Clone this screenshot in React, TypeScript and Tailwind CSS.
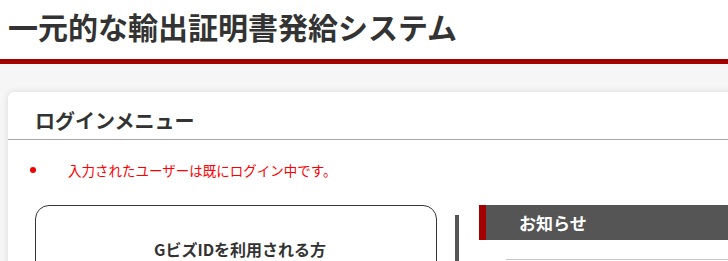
import React from "react";

const font = { fontFamily: '"Noto Sans CJK JP", "Noto Sans", sans-serif' };

const App = (): JSX.Element => {
  return (
    <div className="w-[728px] h-[261px] overflow-hidden bg-[#f6f6f6]" style={font}>
      <header className="h-[64px] bg-white border-b-[5px] border-[#a40000] flex items-center pl-[8px] pb-[8px]">
        <h1 className="text-[30px] font-bold leading-none text-[#333]">
          一元的な輸出証明書発給システム
        </h1>
      </header>
      <div className="pt-[28px] pl-[8px]">
        <div className="w-[740px] h-[200px] bg-white rounded-tl-[6px] shadow-[0_0_6px_rgba(0,0,0,0.12)]">
          <div className="h-[48px] pt-[15px] pl-[27px] border-b border-[#a6a6a6]">
            <h2 className="text-[20px] font-bold leading-[28px] text-[#333]">ログインメニュー</h2>
          </div>
          <ul className="pt-[20px] pl-[22px]">
            <li className="flex items-center h-[20px]">
              <span className="w-[6px] h-[6px] rounded-full bg-[#ee0000]" />
              <span className="ml-[32px] text-[13.5px] leading-[20px] text-[#ff0000]">
                入力されたユーザーは既にログイン中です。
              </span>
            </li>
          </ul>
          <div className="flex mt-[25px] pl-[27px]">
            <div className="w-[402px] h-[80px] border border-[#333] rounded-[14px] pt-[31px] text-center">
              <p className="text-[16px] font-bold leading-[24px] text-[#333] pl-[8px]">GビズIDを利用される方</p>
            </div>
            <div className="ml-[18px] mt-[10px] w-[4px] h-[70px] bg-[#555]" />
            <div className="ml-[20px] flex-1">
              <div className="flex h-[35px]">
                <div className="w-[7px] bg-[#a40000]" />
                <div className="flex-1 bg-[#555] flex items-center pl-[33px]">
                  <span className="text-[17px] font-bold text-white leading-none">お知らせ</span>
                </div>
              </div>
              <div className="mt-[19px] ml-[27px] border-t border-[#c8c8c8]" />
            </div>
          </div>
        </div>
      </div>
    </div>
  );
};

export default App;
